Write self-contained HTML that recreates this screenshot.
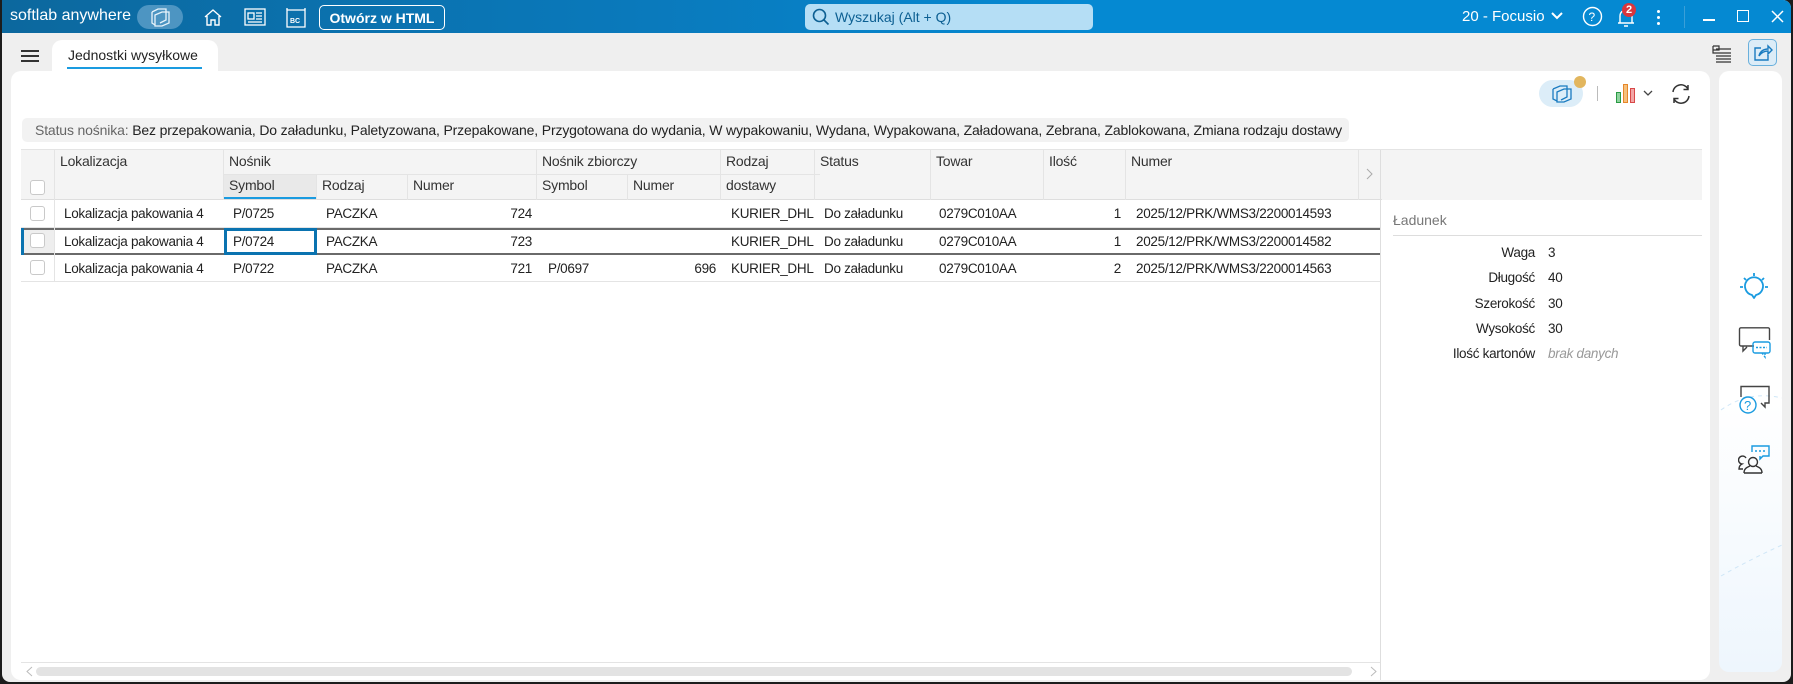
<!DOCTYPE html>
<html><head><meta charset="utf-8">
<style>
*{box-sizing:border-box;margin:0;padding:0}
body{width:1793px;height:684px;overflow:hidden;background:#1c1c1c;font-family:"Liberation Sans",sans-serif;position:relative;color:#222}
.a{position:absolute}
#win{position:absolute;left:2px;top:0;width:1789px;height:682px;background:#efefef;border-radius:0 8px 8px 8px;overflow:hidden}
#tb{position:absolute;left:0;top:0;width:100%;height:33px;background:linear-gradient(90deg,#0c689e 0%,#0a79bb 35%,#0589d2 60%,#0589d2 100%)}
.t{position:absolute;white-space:nowrap}
.w{color:#fff}
.hd{position:absolute;font-size:14px;color:#333;white-space:nowrap;letter-spacing:-0.2px}
.cell{position:absolute;font-size:13.5px;color:#222;white-space:nowrap;letter-spacing:-0.3px}
.cb{position:absolute;width:15px;height:15px;border:1px solid #c9c9c9;border-radius:3px;background:#fff}
.vl{position:absolute;width:1px;background:#e4e4e4}
.hl{position:absolute;height:1px;background:#e4e4e4}
</style></head><body>
<div id="win">
<div id="tb">
 <div class="t w" style="left:8px;top:7px;font-size:16px">softlab anywhere</div>
 <div class="a" style="left:135px;top:5px;width:46px;height:24px;border-radius:12px;background:#4d95c2"></div>
 <svg class="a" style="left:147px;top:8px" width="22" height="19" viewBox="0 0 22 19" fill="none" stroke="#e8f4fb" stroke-width="1.3"><path d="M3 4 L9 1 L17 1 L17 12 L11 15"/><path d="M6 7 L13 4 L20 4 L20 15 L13 18 L6 18 Z"/><path d="M3 4 L3 15 L6 17"/></svg>
 <svg class="a" style="left:201px;top:8px" width="20" height="19" viewBox="0 0 20 19" fill="none" stroke="#fff" stroke-width="1.4"><path d="M2 9 L10 2 L18 9 M4 8 V17 H8 V12 H12 V17 H16 V8"/></svg>
 <svg class="a" style="left:242px;top:8px" width="22" height="18" viewBox="0 0 22 18" fill="none" stroke="#fff" stroke-width="1.3"><rect x="1" y="1" width="20" height="16"/><rect x="4" y="5" width="6" height="6"/><path d="M12 5h6M12 8h6M12 11h6M4 14h14"/></svg>
 <svg class="a" style="left:284px;top:7px" width="20" height="21" viewBox="0 0 20 21" fill="none" stroke="#fff" stroke-width="1.3"><path d="M1 3 H19 V20 H1 Z"/><path d="M1 3 L1 1 M19 3 V1"/><text x="4" y="16" font-size="7" fill="#fff" stroke="none" font-family="Liberation Sans" font-weight="bold">BC</text></svg>
 <div class="a" style="left:317px;top:5px;width:126px;height:25px;border:1.5px solid #fff;border-radius:5px"></div>
 <div class="t w" style="left:317px;top:10px;width:126px;text-align:center;font-size:14px;font-weight:bold">Otwórz w HTML</div>
 <div class="a" style="left:803px;top:4px;width:288px;height:26px;border-radius:5px;background:#b5def5"></div>
 <svg class="a" style="left:810px;top:8px" width="18" height="18" viewBox="0 0 18 18" fill="none" stroke="#0c5f92" stroke-width="1.6"><circle cx="7.5" cy="7.5" r="6"/><path d="M12 12 L16.5 16.5"/></svg>
 <div class="t" style="left:833px;top:9px;font-size:14px;color:#0c5f92">Wyszukaj (Alt + Q)</div>
 <div class="t w" style="left:1460px;top:8px;font-size:15px">20 - Focusio</div>
 <svg class="a" style="left:1549px;top:12px" width="12" height="8" viewBox="0 0 12 8" fill="none" stroke="#fff" stroke-width="2"><path d="M1 1 L6 6 L11 1"/></svg>
 <svg class="a" style="left:1580px;top:6px" width="21" height="21" viewBox="0 0 21 21" fill="none" stroke="#fff" stroke-width="1.4"><circle cx="10.5" cy="10.5" r="9"/><text x="6.5" y="15" font-size="12" fill="#fff" stroke="none" font-family="Liberation Sans">?</text></svg>
 <svg class="a" style="left:1614px;top:6px" width="20" height="22" viewBox="0 0 20 22" fill="none" stroke="#fff" stroke-width="1.4"><path d="M4 17 V10 A6 6 0 0 1 16 10 V17 Z M2 17 H18 M8 20 H12"/></svg>
 <div class="a" style="left:1620px;top:3px;width:14px;height:14px;border-radius:7px;background:#d9363e;color:#fff;font-size:11px;font-weight:bold;text-align:center;line-height:14px">2</div>
 <div class="a" style="left:1655px;top:10px;width:3px;height:3px;background:#fff;border-radius:2px;box-shadow:0 6px 0 #fff,0 12px 0 #fff"></div>
 <div class="a" style="left:1682px;top:6px;width:1px;height:22px;background:#3a9fd8"></div>
 <div class="a" style="left:1701px;top:19px;width:12px;height:1.5px;background:#fff"></div>
 <div class="a" style="left:1735px;top:10px;width:12px;height:12px;border:1.5px solid #fff"></div>
 <svg class="a" style="left:1769px;top:10px" width="13" height="13" viewBox="0 0 13 13" stroke="#fff" stroke-width="1.5"><path d="M1 1 L12 12 M12 1 L1 12"/></svg>
</div>

<div class="a" style="left:19px;top:50px;width:18px;height:2px;background:#333;box-shadow:0 5px 0 #333,0 10px 0 #333"></div>
<div class="a" style="left:50px;top:40px;width:166px;height:40px;background:#fff;border-radius:10px 10px 0 0"></div>
<div class="t" style="left:66px;top:47px;font-size:14px;color:#222">Jednostki wysyłkowe</div>
<div class="a" style="left:65px;top:67px;width:135px;height:2px;background:#1a9be0"></div>
<svg class="a" style="left:1710px;top:45px" width="20" height="18" viewBox="0 0 20 18" fill="none" stroke="#333" stroke-width="1.2"><path d="M1 1 V8 H5 M1 1 H7 V5 H1 M4 4 H19 M4 8 H19 M4 11 H19 M4 14 H19 M4 17 H19"/></svg>
<div class="a" style="left:1746px;top:39px;width:29px;height:27px;border:1px solid #6ab0dc;border-radius:5px;background:#dcecf7"></div>
<svg class="a" style="left:1751px;top:43px" width="20" height="19" viewBox="0 0 20 19" fill="none" stroke="#1a7bc0" stroke-width="1.4"><path d="M8 5 H2 V17 H15 V12"/><path d="M6 13 C7 8 11 6 15 6 V3 L19 7 L15 11 V8 C11 8 8 10 6 13 Z"/></svg>

<div class="a" style="left:9px;top:71px;width:1699px;height:609px;background:#fff;border-radius:10px"></div>
<div class="a" style="left:1717px;top:71px;width:63px;height:601px;border-radius:10px;background:linear-gradient(180deg,#fff 0%,#fff 55%,#eef6fd 100%)"></div>
<svg class="a" style="left:1717px;top:380px" width="63" height="240" viewBox="0 0 63 240" fill="none" stroke="#cfe6f7" stroke-dasharray="4 4"><path d="M2 30 Q30 10 63 18"/><path d="M2 196 Q30 180 63 165"/></svg>
<svg class="a" style="left:1736px;top:270px" width="32" height="32" viewBox="0 0 32 32" fill="none" stroke="#1a9be0" stroke-width="1.8"><path d="M16 28 L14 25 A9 9 0 1 1 18 25 Z" stroke-linejoin="round"/><path d="M16 3 V6 M6 8 L8 10 M26 8 L24 10 M2 17 H5 M27 17 H30"/></svg>
<svg class="a" style="left:1736px;top:327px" width="34" height="32" viewBox="0 0 34 32" fill="none" stroke-width="1.4"><path d="M16 19 H3 A1.5 1.5 0 0 1 1.5 17.5 V2 A1.5 1.5 0 0 1 3 0.8 H30 A1.5 1.5 0 0 1 31.5 2 V13 M5 19 V24 L9 20" stroke="#444"/><rect x="15" y="15" width="17" height="11" rx="2" stroke="#1a9be0"/><path d="M18 20.5 H29 M27 26 V30 L24 26" stroke="#1a9be0" stroke-dasharray="2 1.5"/></svg>
<svg class="a" style="left:1736px;top:385px" width="34" height="32" viewBox="0 0 34 32" fill="none" stroke-width="1.4"><path d="M3 12 V1.5 H31 V18 H27 L27 22 L23 18" stroke="#444"/><circle cx="10" cy="20" r="8" stroke="#1a9be0"/><text x="6" y="25" font-size="13" fill="#1a9be0" stroke="none" font-family="Liberation Sans">?</text></svg>
<svg class="a" style="left:1736px;top:444px" width="34" height="32" viewBox="0 0 34 32" fill="none" stroke-width="1.4"><path d="M14 8 V2 H31 V12 H25 L22 15 V12" stroke="#1a9be0"/><path d="M17 7 H28" stroke="#1a9be0" stroke-dasharray="2 2"/><circle cx="15" cy="18" r="4.5" stroke="#333"/><path d="M6 29 C6 24 10 23 12 22 M24 29 C24 24 20 23 18 22 M6 29 H24" stroke="#333"/><path d="M8 14 A4 4 0 1 0 4 20 C2 21 1 23 1 25 H5" stroke="#333"/></svg>

<div class="a" style="left:1537px;top:80px;width:44px;height:27px;border-radius:14px;background:#dcedf8"></div>
<svg class="a" style="left:1549px;top:84px" width="22" height="20" viewBox="0 0 22 20" fill="none" stroke="#1a7bc0" stroke-width="1.3"><path d="M2 5 L9 2 L16 2 L16 13 L10 16"/><path d="M6 8 L13 5 L20 5 L20 15 L13 18 L6 18 Z"/><path d="M2 5 L2 15 L6 17"/></svg>
<div class="a" style="left:1572px;top:76px;width:12px;height:12px;border-radius:6px;background:#e2b65e"></div>
<div class="a" style="left:1595px;top:86px;width:1px;height:15px;background:#bbb"></div>
<div class="a" style="left:1614px;top:92px;width:5px;height:11px;border:1.3px solid #2a9a44;background:#8fd39e"></div>
<div class="a" style="left:1621px;top:84px;width:5px;height:19px;border:1.3px solid #e6872a;background:#f6c07c"></div>
<div class="a" style="left:1628px;top:88px;width:5px;height:15px;border:1.3px solid #d84848;background:#f3a6a6"></div>
<svg class="a" style="left:1641px;top:90px" width="10" height="6" viewBox="0 0 10 6" fill="none" stroke="#444" stroke-width="1.3"><path d="M1 1 L5 5 L9 1"/></svg>
<svg class="a" style="left:1668px;top:83px" width="22" height="22" viewBox="0 0 22 22" fill="none" stroke="#333" stroke-width="1.5"><path d="M3 9 A8 8 0 0 1 18 6 M18 2 V6.5 H13.5"/><path d="M19 13 A8 8 0 0 1 4 16 M4 20 V15.5 H8.5"/></svg>

<div class="a" style="left:20px;top:118px;width:1327px;height:24px;background:#f2f2f2;border-radius:5px"></div>
<div class="t" style="left:33px;top:122px;font-size:14px;color:#666;letter-spacing:-0.15px">Status nośnika: <span style="color:#222">Bez przepakowania, Do załadunku, Paletyzowana, Przepakowane, Przygotowana do wydania, W wypakowaniu, Wydana, Wypakowana, Załadowana, Zebrana, Zablokowana, Zmiana rodzaju dostawy</span></div>

<div class="a" style="left:19px;top:150px;width:1681px;height:50px;background:#f4f4f4"></div>
<div class="hl" style="left:19px;top:149px;width:1681px"></div>
<div class="hl" style="left:19px;top:199px;width:1361px;background:#dedede"></div>
<div class="hl" style="left:221px;top:174px;width:597px"></div>
<div class="a" style="left:221px;top:175px;width:93px;height:24px;background:#e9e9e9"></div>
<div class="a" style="left:222px;top:197px;width:92px;height:2px;background:#1a9be0"></div>
<div class="vl" style="left:52px;top:150px;height:50px"></div>
<div class="vl" style="left:221px;top:150px;height:50px"></div>
<div class="vl" style="left:314px;top:175px;height:25px"></div>
<div class="vl" style="left:405px;top:175px;height:25px"></div>
<div class="vl" style="left:534px;top:150px;height:50px"></div>
<div class="vl" style="left:625px;top:175px;height:25px"></div>
<div class="vl" style="left:718px;top:150px;height:50px"></div>
<div class="vl" style="left:812px;top:150px;height:50px"></div>
<div class="vl" style="left:928px;top:150px;height:50px"></div>
<div class="vl" style="left:1041px;top:150px;height:50px"></div>
<div class="vl" style="left:1123px;top:150px;height:50px"></div>
<div class="vl" style="left:1356px;top:150px;height:50px"></div>
<div class="vl" style="left:1378px;top:150px;height:530px;background:#dedede"></div>
<div class="cb" style="left:28px;top:180px"></div>
<div class="hd" style="left:58px;top:153px">Lokalizacja</div>
<div class="hd" style="left:227px;top:153px">Nośnik</div>
<div class="hd" style="left:227px;top:177px">Symbol</div>
<div class="hd" style="left:320px;top:177px">Rodzaj</div>
<div class="hd" style="left:411px;top:177px">Numer</div>
<div class="hd" style="left:540px;top:153px">Nośnik zbiorczy</div>
<div class="hd" style="left:540px;top:177px">Symbol</div>
<div class="hd" style="left:631px;top:177px">Numer</div>
<div class="hd" style="left:724px;top:153px">Rodzaj</div>
<div class="hd" style="left:724px;top:177px">dostawy</div>
<div class="hd" style="left:818px;top:153px">Status</div>
<div class="hd" style="left:934px;top:153px">Towar</div>
<div class="hd" style="left:1047px;top:153px">Ilość</div>
<div class="hd" style="left:1129px;top:153px">Numer</div>
<svg class="a" style="left:1364px;top:168px" width="7" height="12" viewBox="0 0 7 12" fill="none" stroke="#aaa" stroke-width="1"><path d="M1 1 L6 6 L1 11"/></svg>

<div class="hl" style="left:19px;top:227px;width:1359px"></div>
<div class="hl" style="left:19px;top:281px;width:1359px"></div>
<div class="a" style="left:19px;top:228px;width:1359px;height:2px;background:#6a6a6a"></div>
<div class="a" style="left:19px;top:253px;width:1359px;height:2px;background:#6a6a6a"></div>
<div class="a" style="left:19px;top:230px;width:33px;height:23px;background:#eee"></div>
<div class="a" style="left:19px;top:228px;width:3px;height:27px;background:#0a73b0"></div>
<div class="a" style="left:222px;top:228px;width:93px;height:27px;border:3px solid #0a73b0"></div>
<div class="vl" style="left:52px;top:200px;height:81px"></div>

<div class="cb" style="left:28px;top:206px"></div>
<div class="cb" style="left:28px;top:233px"></div>
<div class="cb" style="left:28px;top:260px"></div>

<div class="cell" style="left:62px;top:206px">Lokalizacja pakowania 4</div>
<div class="cell" style="left:231px;top:206px">P/0725</div>
<div class="cell" style="left:324px;top:206px">PACZKA</div>
<div class="cell" style="left:405px;top:206px;width:125px;text-align:right">724</div>
<div class="cell" style="left:729px;top:206px">KURIER_DHL</div>
<div class="cell" style="left:822px;top:206px">Do załadunku</div>
<div class="cell" style="left:937px;top:206px">0279C010AA</div>
<div class="cell" style="left:1041px;top:206px;width:78px;text-align:right">1</div>
<div class="cell" style="left:1134px;top:206px">2025/12/PRK/WMS3/2200014593</div>

<div class="cell" style="left:62px;top:234px">Lokalizacja pakowania 4</div>
<div class="cell" style="left:231px;top:234px">P/0724</div>
<div class="cell" style="left:324px;top:234px">PACZKA</div>
<div class="cell" style="left:405px;top:234px;width:125px;text-align:right">723</div>
<div class="cell" style="left:729px;top:234px">KURIER_DHL</div>
<div class="cell" style="left:822px;top:234px">Do załadunku</div>
<div class="cell" style="left:937px;top:234px">0279C010AA</div>
<div class="cell" style="left:1041px;top:234px;width:78px;text-align:right">1</div>
<div class="cell" style="left:1134px;top:234px">2025/12/PRK/WMS3/2200014582</div>

<div class="cell" style="left:62px;top:261px">Lokalizacja pakowania 4</div>
<div class="cell" style="left:231px;top:261px">P/0722</div>
<div class="cell" style="left:324px;top:261px">PACZKA</div>
<div class="cell" style="left:405px;top:261px;width:125px;text-align:right">721</div>
<div class="cell" style="left:546px;top:261px">P/0697</div>
<div class="cell" style="left:625px;top:261px;width:89px;text-align:right">696</div>
<div class="cell" style="left:729px;top:261px">KURIER_DHL</div>
<div class="cell" style="left:822px;top:261px">Do załadunku</div>
<div class="cell" style="left:937px;top:261px">0279C010AA</div>
<div class="cell" style="left:1041px;top:261px;width:78px;text-align:right">2</div>
<div class="cell" style="left:1134px;top:261px">2025/12/PRK/WMS3/2200014563</div>

<div class="hl" style="left:19px;top:662px;width:1359px"></div>
<svg class="a" style="left:24px;top:666px" width="7" height="11" viewBox="0 0 7 11" fill="none" stroke="#bbb"><path d="M6 1 L1 5.5 L6 10"/></svg>
<div class="a" style="left:34px;top:667px;width:1316px;height:9px;border-radius:5px;background:#e3e3e3"></div>
<svg class="a" style="left:1368px;top:666px" width="7" height="11" viewBox="0 0 7 11" fill="none" stroke="#bbb"><path d="M1 1 L6 5.5 L1 10"/></svg>

<div class="t" style="left:1391px;top:212px;font-size:14px;color:#777">Ładunek</div>
<div class="hl" style="left:1391px;top:235px;width:309px;background:#ddd"></div>
<div class="cell" style="left:1380px;top:245px;width:153px;text-align:right">Waga</div>
<div class="cell" style="left:1546px;top:245px">3</div>
<div class="cell" style="left:1380px;top:270px;width:153px;text-align:right">Długość</div>
<div class="cell" style="left:1546px;top:270px">40</div>
<div class="cell" style="left:1380px;top:296px;width:153px;text-align:right">Szerokość</div>
<div class="cell" style="left:1546px;top:296px">30</div>
<div class="cell" style="left:1380px;top:321px;width:153px;text-align:right">Wysokość</div>
<div class="cell" style="left:1546px;top:321px">30</div>
<div class="cell" style="left:1380px;top:346px;width:153px;text-align:right">Ilość kartonów</div>
<div class="cell" style="left:1546px;top:346px;color:#999;font-style:italic">brak danych</div>
</div>
</body></html>
